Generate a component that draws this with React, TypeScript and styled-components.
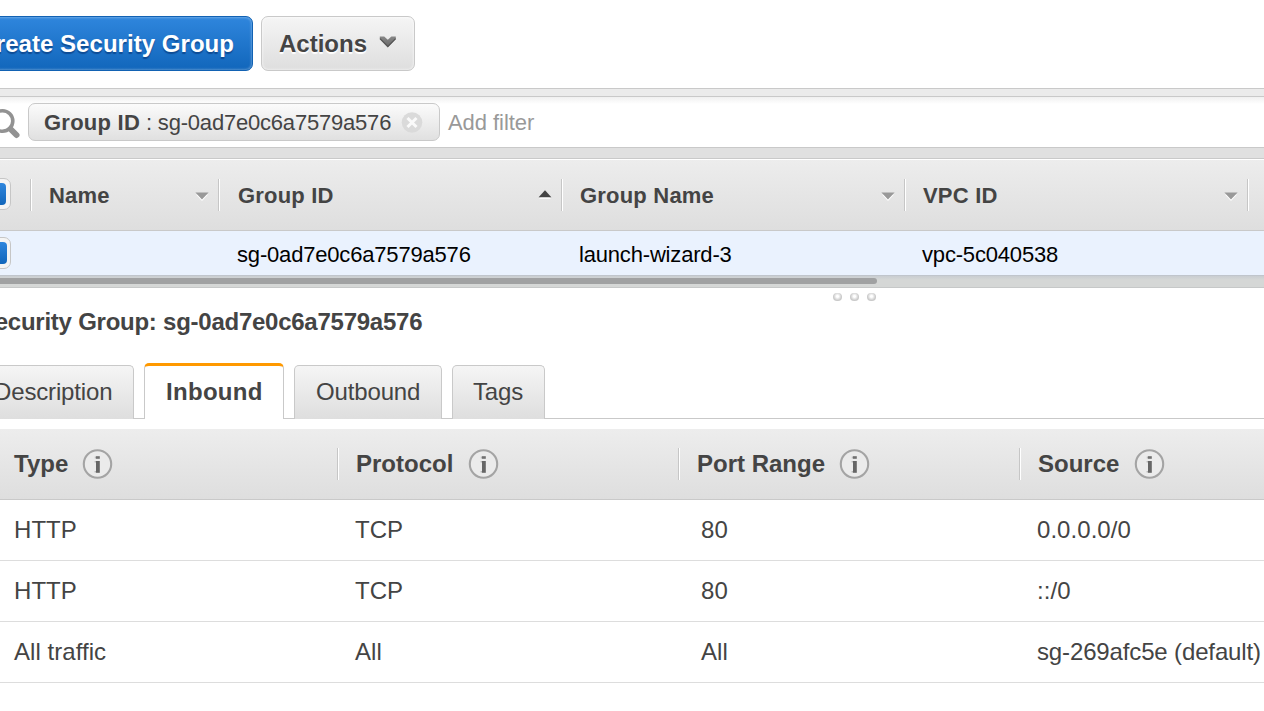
import React from 'react';
import styled, { createGlobalStyle, css } from 'styled-components';

const Global = createGlobalStyle`
  * { box-sizing: border-box; }
  html, body { margin: 0; padding: 0; background: #fff; overflow: hidden; }
  body { font-family: "Liberation Sans", Arial, sans-serif; color: #444; }
`;

const Page = styled.div`
  width: 1264px;
  height: 711px;
  overflow: hidden;
  display: flex;
  flex-direction: column;
  background: #fff;
`;

const Toolbar = styled.header`
  flex: none;
  display: flex;
  gap: 8px;
  height: 88px;
  padding-top: 16px;
`;

const Button = styled.button<{ $primary?: boolean }>`
  display: flex;
  align-items: center;
  height: 55px;
  border-radius: 7px;
  font: bold 24px/28px "Liberation Sans", Arial, sans-serif;
  white-space: nowrap;
  ${p => p.$primary ? css`
    width: 283px;
    margin-left: -30px;
    padding: 0 18px 0 0;
    justify-content: flex-end;
    letter-spacing: 0.04px;
    color: #fff;
    border: 1px solid #1262b3;
    background: linear-gradient(#2f86dd, #1166bb);
    box-shadow: inset 0 0 3px rgba(255, 255, 255, 0.55);
    text-shadow: 0 2px 1px rgba(0, 40, 100, 0.5);
  ` : css`
    width: 154px;
    padding: 0 0 0 17px;
    color: #444;
    border: 1px solid #c9c9c9;
    background: linear-gradient(#f5f5f5, #dedede);
    box-shadow: inset 0 0 3px rgba(255, 255, 255, 0.9);
    text-shadow: 0 2px 1px #fff;
  `}
`;

const Chevron = styled.svg`
  margin: -4px 0 0 12px;
`;

const Strip = styled.div<{ $h: number; $bg: string }>`
  flex: none;
  height: ${p => p.$h}px;
  background: ${p => p.$bg};
  border-top: 1px solid #c9c9c9;
  border-bottom: 1px solid #c9c9c9;
`;

const FilterBar = styled.div`
  flex: none;
  display: flex;
  height: 50px;
  padding-top: 6px;
  background: linear-gradient(#f0f0f0, #fff 7px);
  font-size: 22px;
  line-height: 40px;
`;

const SearchIcon = styled.svg`
  flex: none;
  width: 28px;
  height: 38px;
`;

const Chip = styled.div`
  display: flex;
  align-items: center;
  width: 412px;
  height: 38px;
  padding: 2px 0 0 15px;
  border: 1px solid #c9c9c9;
  border-radius: 7px;
  background: linear-gradient(#fbfbfb, #e0e0e0);
  white-space: pre;
  letter-spacing: -0.2px;
  b { letter-spacing: 0.25px; }
`;

const ChipClose = styled.svg`
  margin: -2px 0 0 10px;
`;

const Placeholder = styled.span`
  margin-left: 8px;
  color: #999;
  letter-spacing: -0.05px;
`;

const HeaderRow = styled.div<{ $top?: boolean }>`
  flex: none;
  display: flex;
  align-items: center;
  height: ${p => p.$top ? 72 : 71}px;
  border-bottom: 1px solid #c9c9c9;
  ${p => p.$top && css`box-shadow: inset 0 1px #fff;`}
  background: linear-gradient(#ededed, #dedede);
`;

const HeaderCell = styled.div<{ $w: number; $large?: boolean; $pad?: number }>`
  flex: none;
  display: flex;
  align-items: center;
  width: ${p => p.$w}px;
  height: 32px;
  padding-left: ${p => p.$pad ?? 18}px;
  border-right: 1px solid #fff;
  box-shadow: inset -1px 0 #c6c6c6;
  font-weight: bold;
  white-space: nowrap;
  ${p => p.$large ? css`
    font-size: 24px;
  ` : css`
    padding-top: 2px;
    font-size: 22px;
    letter-spacing: 0.2px;
  `}
`;

const SortIcon = styled.svg`
  margin: 0 10px 0 auto;
`;

const CheckCell = styled.div<{ $divided?: boolean }>`
  flex: none;
  display: flex;
  align-items: center;
  width: ${p => p.$divided ? 32 : 219}px;
  height: 32px;
  ${p => p.$divided && css`
    border-right: 1px solid #fff;
    box-shadow: inset -1px 0 #c6c6c6;
  `}
`;

const Checkbox = styled.span<{ $edge: number }>`
  width: 32px;
  height: 32px;
  margin-left: -21px;
  margin-top: ${p => p.$edge === 4 ? -2 : 0}px;
  padding: 4px ${p => p.$edge}px 4px 4px;
  border: 1px solid #c6c6c6;
  border-radius: 7px;
  background: #f4f4f4;
  &::before {
    content: "";
    display: block;
    height: 22px;
    border-radius: 4px;
    background: linear-gradient(#2f86dd, #1166bb);
  }
`;

const GroupRow = styled.div`
  flex: none;
  display: flex;
  align-items: center;
  height: 44px;
  background: #eaf2fe;
  color: #000;
  font-size: 22px;
  letter-spacing: -0.18px;
`;

const GroupCell = styled.span<{ $w: number }>`
  width: ${p => p.$w}px;
  padding-left: 18px;
  padding-top: 3px;
`;

const ScrollTrack = styled.div`
  flex: none;
  height: 13px;
  padding-top: 2px;
  background: linear-gradient(#c9cdd1, #d5d7d6 4px);
  border-top: 1px solid #c0c5cc;
  border-bottom: 1px solid #c6c8c8;
`;

const ScrollThumb = styled.div`
  width: 877px;
  height: 6px;
  border-radius: 0 3px 3px 0;
  background: #a0a1a2;
`;

const Grip = styled.div`
  flex: none;
  display: flex;
  gap: 8px;
  height: 20px;
  padding: 5px 0 0 833px;
  span {
    width: 9px;
    height: 8px;
    border-radius: 4px;
    background: radial-gradient(circle at 50% 42%, #fff 1px, #cacaca 4px);
  }
`;

const Title = styled.h1`
  flex: none;
  margin: 0 0 0 -21px;
  height: 55px;
  font-size: 24px;
  line-height: 28px;
  letter-spacing: -0.25px;
  white-space: nowrap;
`;

const Tabs = styled.nav`
  flex: none;
  display: flex;
  align-items: flex-end;
  gap: 10px;
  height: 56px;
  box-shadow: inset 0 -1px #c9c9c9;
`;

const Tab = styled.div<{ $w: number; $active?: boolean; $first?: boolean; $pad?: number }>`
  width: ${p => p.$w}px;
  height: 54px;
  margin-left: ${p => p.$first ? -28 : 0}px;
  padding-left: ${p => p.$pad ?? 21}px;
  border: 1px solid #c9c9c9;
  border-bottom: 0;
  border-radius: 5px 5px 0 0;
  background: linear-gradient(#f5f5f5, #dedede);
  font-size: 24px;
  line-height: 52px;
  letter-spacing: -0.15px;
  white-space: nowrap;
  ${p => p.$active && css`
    height: 56px;
    border-top: 3px solid #f90;
    background: #fff;
    font-weight: bold;
    letter-spacing: 0.3px;
  `}
`;

const RulesHeader = styled(HeaderRow)`
  margin-top: 10px;
`;

const InfoIcon = styled.svg<{ $gap: number }>`
  margin-left: ${p => p.$gap}px;
`;

const RuleRow = styled.div`
  flex: none;
  display: flex;
  height: 61px;
  border-bottom: 1px solid #ddd;
  font-size: 24px;
  line-height: 60px;
  white-space: nowrap;
`;

const RuleCell = styled.span<{ $w: number; $pad: number; $tight?: boolean }>`
  flex: none;
  width: ${p => p.$w}px;
  padding-left: ${p => p.$pad}px;
  letter-spacing: ${p => p.$tight ? '-0.14px' : '0.05px'};
`;

const Sort = ({ up }: { up?: boolean }) => (
  <SortIcon width="14" height="12" viewBox="0 0 14 12">
    {up ? (
      <>
        <path d="M1 8.8h12L7 3.5z" fill="#fff" />
        <path d="M.6 7.2h12.8L7 .2z" fill="#444" />
      </>
    ) : (
      <>
        <path d="M1 4.5h12L7 11z" fill="#fff" />
        <path d="M.4 2.4h13.2L7 9.6z" fill="#999" />
      </>
    )}
  </SortIcon>
);

const Info = ({ gap }: { gap: number }) => (
  <InfoIcon $gap={gap} width="31" height="30" viewBox="0 0 31 30">
    <circle cx="15.5" cy="15" r="13.7" fill="#ebebeb" stroke="#a4a4a4" strokeWidth="2.1" />
    <path d="M12.8 7.4h1.4v2.2h-1.4zM12.6 12h1.4v1.6h-1.4zM12.6 22h1.4v1.6h-1.4z" fill="#b8b8b8" />
    <path d="M14 7.2h3.8v2.6H14z" fill="#707070" />
    <path d="M14 12h3.8v11.8H14z" fill="#666" />
  </InfoIcon>
);

const rules = [
  ['HTTP', 'TCP', '80', '0.0.0.0/0'],
  ['HTTP', 'TCP', '80', '::/0'],
  ['All traffic', 'All', 'All', 'sg-269afc5e (default)'],
];

const ruleColumns = [
  { label: 'Type', w: 339, headPad: 14, cellPad: 14, gap: 14 },
  { label: 'Protocol', w: 341, headPad: 17, cellPad: 16, gap: 15 },
  { label: 'Port Range', w: 341, headPad: 17, cellPad: 21, gap: 14 },
  { label: 'Source', w: 343, headPad: 17, cellPad: 16, gap: 15 },
];

export default function App() {
  return (
    <Page>
      <Global />
      <Toolbar>
        <Button $primary>Create Security Group</Button>
        <Button>
          Actions
          <Chevron width="18" height="12" viewBox="0 0 18 12">
            <defs>
              <linearGradient id="chev" x1="0" y1="0" x2="0" y2="1">
                <stop offset="0" stopColor="#888" />
                <stop offset="1" stopColor="#666" />
              </linearGradient>
            </defs>
            <path d="M.8.6h4.4l3.6 3.2L12.4.6h4.4v2.6l-8 8.2-8-8.2z" fill="url(#chev)" />
            <path d="M1 2.6l7.8 7.8 7.8-7.8" fill="none" stroke="#555" strokeWidth="1.1" />
          </Chevron>
        </Button>
      </Toolbar>
      <Strip $h={9} $bg="#ebebeb" />
      <FilterBar>
        <SearchIcon viewBox="0 0 28 38">
          <circle cx="2.5" cy="18" r="10.3" fill="none" stroke="#929292" strokeWidth="3.6" />
          <path d="M10.5 26l6 6" stroke="#929292" strokeWidth="6" strokeLinecap="round" />
        </SearchIcon>
        <Chip>
          <b>Group ID</b> : sg-0ad7e0c6a7579a576
          <ChipClose width="22" height="22" viewBox="0 0 22 22">
            <circle cx="11" cy="11.5" r="10.3" fill="#dadada" />
            <path d="M6.5 7l9 9m0-9l-9 9" stroke="#fafafa" strokeWidth="3" />
          </ChipClose>
        </Chip>
        <Placeholder>Add filter</Placeholder>
      </FilterBar>
      <Strip $h={12} $bg="#e0e0e0" />
      <HeaderRow $top>
        <CheckCell $divided><Checkbox $edge={4} /></CheckCell>
        <HeaderCell $w={188} $pad={17}>Name<Sort /></HeaderCell>
        <HeaderCell $w={343}>Group ID<Sort up /></HeaderCell>
        <HeaderCell $w={343} $pad={17}>Group Name<Sort /></HeaderCell>
        <HeaderCell $w={343} $pad={17}>VPC ID<Sort /></HeaderCell>
      </HeaderRow>
      <GroupRow>
        <CheckCell><Checkbox $edge={3} /></CheckCell>
        <GroupCell $w={342}>sg-0ad7e0c6a7579a576</GroupCell>
        <GroupCell $w={343}>launch-wizard-3</GroupCell>
        <GroupCell $w={343}>vpc-5c040538</GroupCell>
      </GroupRow>
      <ScrollTrack><ScrollThumb /></ScrollTrack>
      <Grip><span /><span /><span /></Grip>
      <Title>Security Group: sg-0ad7e0c6a7579a576</Title>
      <Tabs>
        <Tab $w={162} $first>Description</Tab>
        <Tab $w={140} $active>Inbound</Tab>
        <Tab $w={148}>Outbound</Tab>
        <Tab $w={93} $pad={20}>Tags</Tab>
      </Tabs>
      <RulesHeader>
        {ruleColumns.map(c => (
          <HeaderCell key={c.label} $w={c.w} $large $pad={c.headPad}>{c.label}<Info gap={c.gap} /></HeaderCell>
        ))}
      </RulesHeader>
      {rules.map((rule, i) => (
        <RuleRow key={i}>
          {rule.map((text, j) => (
            <RuleCell key={j} $w={ruleColumns[j].w} $pad={ruleColumns[j].cellPad} $tight={text.length > 15}>{text}</RuleCell>
          ))}
        </RuleRow>
      ))}
    </Page>
  );
}
